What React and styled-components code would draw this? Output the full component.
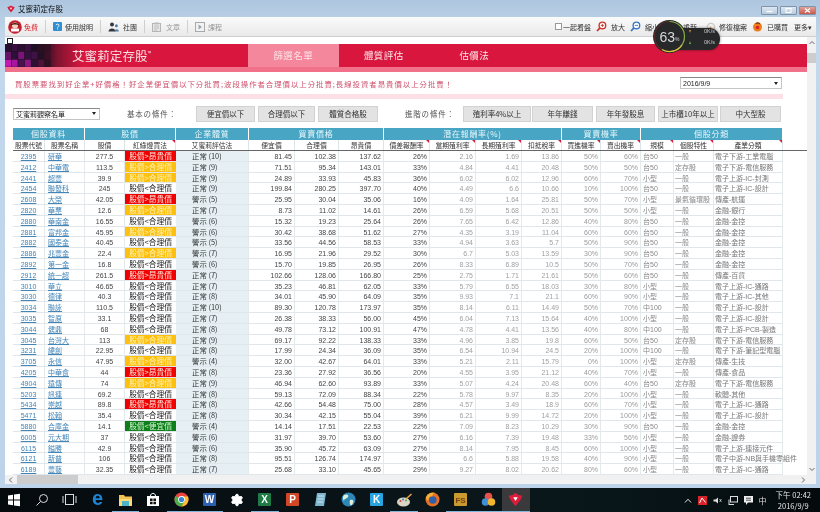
import React from "react";
import styled, { createGlobalStyle } from "styled-components";
import { Settings } from "lucide-react";

const cjk = `"Noto Sans CJK TC", "Liberation Sans", sans-serif`;
const num = `"Liberation Sans", "Noto Sans CJK TC", sans-serif`;

const Global = createGlobalStyle`
	html, body {
		margin: 0;
		padding: 0;
		background: #000;
	}
	* {
		box-sizing: border-box;
	}
`;

const Screen = styled.div`
	position: relative;
	width: 820px;
	height: 512px;
	overflow: hidden;
	display: flex;
	flex-direction: column;
	font-family: ${cjk};
	filter: blur(0.3px);
`;

const Win = styled.div`
	height: 488px;
	display: flex;
	flex-direction: column;
	padding: 0 4px 4px 5px;
	background: linear-gradient(#aec6df, #c3d8ec 40px, #bcd3ea);
`;

const TitleBar = styled.div`
	height: 17px;
	display: flex;
	align-items: center;
	font-size: 7.5px;
	color: #111;
	gap: 3px;
	padding-left: 2px;
`;

const WinButtons = styled.div`
	margin-left: auto;
	display: flex;
	gap: 2px;
	padding-top: 3px;
	margin-right: 0;
`;

const WinButton = styled.div`
	width: ${props => props.w}px;
	height: 9px;
	border: 1px solid #7f93a8;
	border-radius: 1px;
	background: ${props => props.close ? "linear-gradient(#e0a49c, #c9584a)" : "linear-gradient(#dde8f2, #b9cbde)"};
	display: flex;
	align-items: center;
	justify-content: center;
`;

const Toolbar = styled.div`
	height: 20px;
	display: flex;
	align-items: center;
	justify-content: space-between;
	background: linear-gradient(#fbfbfb, #e9e9e9);
	border-bottom: 1px solid #cfcfcf;
	font-size: 7px;
	color: #333;
	padding: 0 4px 0 3px;
`;

const ToolGroup = styled.div`
	display: flex;
	align-items: center;
`;

const ToolItem = styled.div`
	display: flex;
	align-items: center;
	gap: ${props => props.gap || 3}px;
	margin-right: ${props => props.mr || 0}px;
	color: ${props => props.color || "#333"};
	white-space: nowrap;
`;

const ToolSep = styled.div`
	width: 1px;
	height: 13px;
	background: #cfcfcf;
	margin: 0 7px;
`;

const Body = styled.div`
	position: relative;
	height: 438px;
	display: flex;
	background: #fff;
`;

const Main = styled.div`
	width: 802px;
	padding-top: 7px;
	overflow: hidden;
`;

const VBar = styled.div`
	width: 9px;
	background: #f1f1f1;
	display: flex;
	flex-direction: column;
	align-items: center;
	justify-content: space-between;
	padding: 3px 0 3px;
	color: #666;
`;

const VThumb = styled.div`
	width: 9px;
	height: 10px;
	background: #cdcdcd;
	margin-top: 7px;
	margin-bottom: auto;
`;

const HBar = styled.div`
	height: 9px;
	background: #f1f1f1;
	display: flex;
	align-items: center;
	color: #666;
	padding: 0 10px 0 3px;
`;

const HThumb = styled.div`
	width: 61px;
	height: 9px;
	background: #cdcdcd;
	margin-left: 3px;
	margin-right: auto;
`;

const Arrow = styled.svg`
	width: 6px;
	height: 6px;
	flex: none;
`;

const Handle = styled.div`
	position: absolute;
	left: 2px;
	top: 1px;
	width: 6px;
	height: 6px;
	background: #fff;
	border: 1px solid #222;
`;

const Banner = styled.div`
	height: 23px;
	display: flex;
	background: linear-gradient(90deg, #1c0f22 0, #2b0f24 40px, #7d1330 52px, #d9173e 78px);
`;

const Brand = styled.div`
	width: 197px;
	padding-left: 21px;
	color: #f7dfe2;
	font-size: 12.5px;
	line-height: 23px;
	letter-spacing: 0.1px;
	sup {
		font-size: 5px;
		vertical-align: 6px;
		line-height: 0;
	}
`;

const Tab = styled.div`
	width: 90.5px;
	line-height: 23px;
	text-align: center;
	font-size: 9.5px;
	letter-spacing: 0.4px;
	color: ${props => props.active ? "#fde3e8" : "#fbe9ec"};
	background: ${props => props.active ? "#f4879b" : "transparent"};
`;

const BannerStrip = styled.div`
	height: 5px;
	background: #f1718b;
`;

const NoticeRow = styled.div`
	height: 22px;
	display: flex;
	align-items: center;
	justify-content: space-between;
	padding: 0 25px 0 10px;
`;

const Notice = styled.div`
	font-size: 7.4px;
	letter-spacing: 0.98px;
	color: #cf4f6c;
	white-space: nowrap;
`;

const Select = styled.div`
	width: ${props => props.w}px;
	height: 12px;
	border: 1px solid #c4c4c4;
	border-top-color: #8a8a8a;
	background: #fff;
	display: flex;
	align-items: center;
	justify-content: space-between;
	padding: 0 3px 0 2px;
	font-family: ${num};
	font-size: 7px;
	color: #222;
	white-space: nowrap;
`;

const Caret = styled.span`
	width: 0;
	height: 0;
	border-left: 2px solid transparent;
	border-right: 2px solid transparent;
	border-top: 3px solid #222;
`;

const PinkLine = styled.div`
	width: 778px;
	height: 5px;
	background: #fde0e6;
`;

const FilterRow = styled.div`
	height: 29px;
	display: flex;
	align-items: center;
	padding: 0 0 0 8px;
`;

const FilterLabel = styled.div`
	width: ${props => props.w}px;
	padding-left: ${props => props.pl}px;
	font-size: 7.5px;
	letter-spacing: 0.8px;
	color: #555;
	white-space: nowrap;
`;

const FilterButton = styled.div`
	width: ${props => props.w}px;
	height: 16px;
	margin-right: ${props => props.mr ?? 3}px;
	flex: none;
	background: #e3e3e3;
	border: 1px solid #d2d2d2;
	display: flex;
	align-items: center;
	justify-content: center;
	font-size: 7.5px;
	color: #333;
	white-space: nowrap;
`;

const cols = "32px 40px 40px 51px 73px 46px 44px 45px 46px 46px 46px 40px 39px 40px 33px 40px 69px";

const TableWrap = styled.div`
	padding-left: 8px;
`;

const GroupRow = styled.div`
	width: 770px;
	display: grid;
	grid-template-columns: ${cols};
	height: 12px;
`;

const GroupCell = styled.div`
	grid-column: span ${props => props.span};
	background: #48a5c4;
	border-right: 1px solid #fff;
	color: #e8f6fa;
	font-size: 8px;
	letter-spacing: 0.7px;
	line-height: 12px;
	text-align: center;
	position: relative;
`;

const LabelBand = styled.div`
	width: 794px;
	height: 11px;
	border-bottom: 1px solid #666;
`;

const LabelRow = styled.div`
	width: 770px;
	display: grid;
	grid-template-columns: ${cols};
	height: 10px;
`;

const LabelCell = styled.div`
	position: relative;
	font-size: 6.8px;
	line-height: 10px;
	color: #333;
	text-align: center;
	white-space: nowrap;
	border-right: 1px solid #dde4e8;
	${props => props.mark && `
		&::after {
			content: "";
			position: absolute;
			top: 0;
			right: 0;
			border-top: 3px solid #d81e3c;
			border-left: 3px solid transparent;
		}
	`}
`;

const Rows = styled.div`
	width: 770px;
	display: grid;
	grid-template-columns: ${cols};
	grid-auto-rows: 10.8px;
`;

const Cell = styled.div`
	font-family: ${num};
	font-size: 7px;
	line-height: 11px;
	white-space: nowrap;
	border-bottom: 1px solid #e0e6ea;
	border-right: 1px solid #e4e9ec;
	overflow: visible;
	padding: 0 ${props => props.align === "right" ? 2 : 0}px 0 ${props => props.align === "left" ? (props.pl ?? 2) : 0}px;
	text-align: ${props => props.align || "center"};
	color: ${props => props.color || "#444"};
`;

const CodeLink = styled.a`
	color: #4285b8;
	text-decoration: underline;
	font-size: 7px;
	font-family: ${num};
`;

const Tint = styled(Cell)`
	background: #e6f0f4;
	font-size: 7.4px;
	line-height: 9.8px;
	color: #333;
	font-family: ${cjk};
`;

const signalStyle = {
	red: { bg: "#f00000", fg: "#ffe9e0" },
	yellow: { bg: "#fdc010", fg: "#fff2b5" },
	green: { bg: "#0d7f18", fg: "#d6f3d6" },
	none: { bg: "#fff", fg: "#222" },
};

const SignalWrap = styled.div`
	border-bottom: 1px solid #e0e6ea;
	background: #fff;
	overflow: hidden;
`;

const Signal = styled.div`
	height: 9.8px;
	line-height: 10px;
	text-align: center;
	font-size: 7.7px;
	background: ${props => signalStyle[props.kind].bg};
	color: ${props => signalStyle[props.kind].fg};
`;

const Taskbar = styled.div`
	height: 24px;
	display: flex;
	background: linear-gradient(90deg, #050a0d, #0a1519 50%, #08161a 75%, #050a0c);
`;

const Slot = styled.div`
	width: 27.9px;
	height: 24px;
	flex: none;
	display: flex;
	align-items: center;
	justify-content: center;
	background: ${props => props.active ? "#3a3a3c" : "transparent"};
	border-bottom: 1px solid ${props => props.open ? "#7fb6dc" : "transparent"};
`;

const EdgeGlyph = styled.span`
	font-family: "Liberation Sans", sans-serif;
	font-weight: 700;
	font-size: 20px;
	line-height: 18px;
	color: #1d84d6;
	margin-top: -3px;
`;

const Tray = styled.div`
	margin-left: auto;
	display: flex;
	align-items: center;
	gap: 6px;
	color: #ddd;
	padding-right: 9px;
`;

const Clock = styled.div`
	font-size: 7.5px;
	line-height: 11px;
	color: #e6e6e6;
	text-align: center;
	margin-left: 3px;
	font-family: ${cjk};
`;

const ImeMark = styled.span`
	font-size: 8px;
	color: #ddd;
`;

const Meter = styled.div`
	position: absolute;
	left: 653px;
	top: 20px;
	width: 67px;
	height: 33px;
	display: flex;
	align-items: center;
`;

const MeterPill = styled.div`
	position: absolute;
	left: 12px;
	top: 8px;
	width: 55px;
	height: 22px;
	background: #26282a;
	border-radius: 11px;
	box-shadow: 0 0 3px rgba(0, 0, 0, 0.5);
`;

const MeterDial = styled.div`
	position: relative;
	width: 33px;
	height: 33px;
	border-radius: 50%;
	background: #26282a;
	display: flex;
	align-items: center;
	justify-content: center;
	color: #d8d8d8;
	font-family: ${num};
	font-size: 14px;
	font-weight: 300;
	svg {
		position: absolute;
		inset: 0;
	}
	small {
		font-size: 5px;
		margin-top: 5px;
	}
`;

const MeterSpeeds = styled.div`
	position: relative;
	flex: 1;
	padding: 0 5px 0 3px;
	display: flex;
	flex-direction: column;
	gap: 3px;
	font-family: ${num};
	font-size: 5.5px;
	color: #c9c9c9;
`;

const MeterLine = styled.div`
	display: flex;
	justify-content: space-between;
	align-items: center;
	line-height: 8px;
`;

const MeterArrow = styled.span`
	width: 0;
	height: 0;
	border-left: 1.5px solid transparent;
	border-right: 1.5px solid transparent;
	${props => props.up ? "border-top: 3px solid #e08a2c;" : "border-bottom: 3px solid #6fb544;"}
`;

const data = [
	["2395", "研華", "277.5", "red", "正常 (10)", "81.45", "102.38", "137.62", "26%", "2.16", "1.69", "13.86", "50%", "60%", "台50", "一般", "電子下游-工業電腦"],
	["2412", "中華電", "113.5", "yellow", "正常 (9)", "71.51", "95.34", "143.01", "33%", "4.84", "4.41", "20.48", "50%", "50%", "台50", "定存股", "電子下游-電信服務"],
	["2441", "超豐", "39.9", "yellow", "正常 (9)", "24.89", "33.93", "45.83", "36%", "6.02", "6.02", "12.96", "60%", "70%", "小型", "一般", "電子上游-IC-封測"],
	["2454", "聯發科", "245", "none", "正常 (9)", "199.84", "280.25", "397.70", "40%", "4.49", "6.6", "10.66", "10%", "100%", "台50", "一般", "電子上游-IC-設計"],
	["2608", "大榮", "42.05", "red", "警示 (5)", "25.95", "30.04", "35.06", "16%", "4.09", "1.64", "25.81", "50%", "70%", "小型", "景氣循環股", "傳產-航運"],
	["2820", "華票", "12.6", "yellow", "正常 (7)", "8.73", "11.02", "14.61", "26%", "6.59", "5.68", "20.51", "50%", "50%", "小型", "一般", "金融-銀行"],
	["2880", "華南金", "16.55", "none", "警示 (6)", "15.32", "19.23", "25.64", "26%", "7.65", "6.42", "12.86", "40%", "80%", "台50", "一般", "金融-金控"],
	["2881", "富邦金", "45.95", "yellow", "警示 (6)", "30.42", "38.68", "51.62", "27%", "4.35", "3.19", "11.04", "60%", "60%", "台50", "一般", "金融-金控"],
	["2882", "國泰金", "40.45", "none", "警示 (5)", "33.56", "44.56", "58.53", "33%", "4.94", "3.63", "5.7", "50%", "90%", "台50", "一般", "金融-金控"],
	["2886", "兆豐金", "22.4", "yellow", "警示 (7)", "16.95", "21.96", "29.52", "30%", "6.7", "5.03", "13.59", "30%", "90%", "台50", "一般", "金融-金控"],
	["2892", "第一金", "16.8", "none", "警示 (6)", "15.70", "19.85", "26.95", "26%", "8.33", "6.89", "10.5", "50%", "70%", "台50", "一般", "金融-金控"],
	["2912", "統一超", "261.5", "red", "正常 (7)", "102.66", "128.06", "166.80", "25%", "2.75", "1.71", "21.61", "50%", "60%", "台50", "一般", "傳產-百貨"],
	["3010", "華立", "46.65", "none", "正常 (7)", "35.23", "46.81", "62.05", "33%", "5.79", "6.55", "18.03", "30%", "80%", "小型", "一般", "電子上游-IC-通路"],
	["3030", "德律", "40.3", "none", "正常 (8)", "34.01", "45.90", "64.09", "35%", "9.93", "7.1", "21.1", "60%", "90%", "小型", "一般", "電子上游-IC-其他"],
	["3034", "聯詠", "110.5", "none", "正常 (10)", "89.30", "120.78", "173.97", "35%", "8.14", "6.11", "14.49", "50%", "70%", "中100", "一般", "電子上游-IC-設計"],
	["3035", "智原", "33.1", "none", "正常 (7)", "26.38", "38.33", "56.00", "45%", "6.04", "7.13", "15.64", "40%", "100%", "小型", "一般", "電子上游-IC-設計"],
	["3044", "健鼎", "68", "none", "正常 (8)", "49.78", "73.12", "100.91", "47%", "4.78", "4.41", "13.56", "40%", "80%", "中100", "一般", "電子上游-PCB-製造"],
	["3045", "台灣大", "113", "yellow", "正常 (9)", "69.17", "92.22", "138.33", "33%", "4.96", "3.85", "19.8", "60%", "50%", "台50", "定存股", "電子下游-電信服務"],
	["3231", "緯創", "22.95", "none", "正常 (8)", "17.99", "24.34", "36.09", "35%", "6.54", "10.94", "24.5", "20%", "100%", "中100", "一般", "電子下游-筆記型電腦"],
	["3705", "永信", "47.95", "yellow", "警示 (4)", "32.00", "42.67", "64.01", "33%", "5.21", "2.11", "15.79", "0%", "100%", "小型", "定存股", "傳產-生技"],
	["4205", "中華食", "44", "red", "正常 (8)", "23.36", "27.92", "36.56", "20%", "4.55", "3.95", "21.12", "40%", "70%", "小型", "一般", "傳產-食品"],
	["4904", "遠傳", "74", "yellow", "正常 (9)", "46.94", "62.60", "93.89", "33%", "5.07", "4.24", "20.48", "60%", "40%", "台50", "定存股", "電子下游-電信服務"],
	["5203", "訊連", "69.2", "none", "正常 (8)", "59.13", "72.09", "88.34", "22%", "5.78", "9.97", "8.35", "20%", "100%", "小型", "一般", "軟體-其他"],
	["5434", "崇越", "89.8", "red", "正常 (8)", "42.66", "54.48", "75.00", "28%", "4.57", "3.49", "18.9", "60%", "70%", "小型", "一般", "電子上游-IC-通路"],
	["5471", "松翰", "35.4", "none", "正常 (8)", "30.34", "42.15", "55.04", "39%", "6.21", "9.99", "14.72", "20%", "100%", "小型", "一般", "電子上游-IC-設計"],
	["5880", "合庫金", "14.1", "green", "警示 (4)", "14.14", "17.51", "22.53", "22%", "7.09", "8.23", "10.29", "30%", "90%", "台50", "一般", "金融-金控"],
	["6005", "元大期", "37", "none", "警示 (6)", "31.97", "39.70", "53.60", "27%", "6.16", "7.39", "19.48", "33%", "56%", "小型", "一般", "金融-證券"],
	["6115", "鎰勝", "42.9", "none", "警示 (6)", "35.90", "45.72", "63.09", "27%", "8.14", "7.95", "8.45", "60%", "100%", "小型", "一般", "電子上游-連接元件"],
	["6121", "新普", "106", "none", "正常 (8)", "95.51", "126.74", "174.97", "33%", "6.6", "5.88", "19.58", "40%", "90%", "小型", "一般", "電子中游-NB與手機零組件"],
	["6189", "豐藝", "32.35", "none", "正常 (7)", "25.68", "33.10", "45.65", "29%", "9.27", "8.02", "20.62", "80%", "60%", "小型", "一般", "電子上游-IC-通路"],
];

const signalText = {
	red: "股價>昂貴價",
	yellow: "股價>合理價",
	green: "股價<便宜價",
	none: "股價<合理價",
};

const labels = [
	["股票代號"], ["股票名稱"], ["股價"], ["紅綠燈買法", 1], ["艾蜜莉評估法"], ["便宜價"], ["合理價"], ["昂貴價"],
	["價差報酬率", 1], ["當期殖利率", 1], ["長期殖利率", 1], ["扣抵稅率", 1], ["買進機率", 1], ["賣出機率", 1],
	["規模", 1], ["個股特性", 1], ["產業分類", 1],
];

const pixelGrid = [
	["#2a1030", "#3a1040", "#2c0f33", "#3a1240", "#1f0f26", "#2a1020", "#331022"],
	["#6a1268", "#2c1038", "#7a1478", "#331040", "#3e1244", "#241024", "#3c1024"],
	["#c418b0", "#a816a0", "#4a1250", "#8a1684", "#2e1034", "#4a1238", "#2a1020"],
];

const Row = ({ r }) => (
	<>
		<Cell><CodeLink>{r[0]}</CodeLink></Cell>
		<Cell align="left" pl={3}><CodeLink>{r[1]}</CodeLink></Cell>
		<Cell>{r[2]}</Cell>
		<SignalWrap><Signal kind={r[3]}>{signalText[r[3]]}</Signal></SignalWrap>
		<Tint align="left" pl={16}>{r[4]}</Tint>
		<Cell align="right">{r[5]}</Cell>
		<Cell align="right">{r[6]}</Cell>
		<Cell align="right">{r[7]}</Cell>
		<Cell align="right">{r[8]}</Cell>
		<Cell align="right" color="#a0a0a0">{r[9]}</Cell>
		<Cell align="right" color="#a0a0a0">{r[10]}</Cell>
		<Cell align="right" color="#a0a0a0">{r[11]}</Cell>
		<Cell align="right" color="#9a9a9a">{r[12]}</Cell>
		<Cell align="right" color="#9a9a9a">{r[13]}</Cell>
		<Cell align="left" color="#888">{r[14]}</Cell>
		<Cell align="left" color="#888" pl={1}>{r[15]}</Cell>
		<Cell align="left" color="#777" pl={1}>{r[16]}</Cell>
	</>
);

const Pixels = () => (
	<svg width="46" height="23" viewBox="0 0 46 23" style={{ flex: "none", display: "block" }}>
		{pixelGrid.map((line, y) => line.map((c, x) => (
			<rect key={x + "-" + y} x={x * 6.6} y={y * 7.8} width="6" height="7.2" fill={c} />
		)))}
	</svg>
);

const AppMark = ({ size = 8 }) => (
	<svg width={size} height={size} viewBox="0 0 10 10">
		<path d="M5 0.5 7 2 9.5 2.5 8.5 5 5 9.5 1.5 5 0.5 2.5 3 2Z" fill="#d81e3c" />
		<path d="M3.5 3.5h3L5 6Z" fill="#fff" />
	</svg>
);

const Avatar = () => (
	<svg width="14" height="14" viewBox="0 0 14 14">
		<circle cx="7" cy="7" r="6.8" fill="#c3202f" />
		<circle cx="7" cy="5.6" r="3" fill="#f3d3bf" />
		<path d="M2.6 5.6C3 2 11 2 11.4 5.6 9.5 4 4.5 4 2.6 5.6Z" fill="#3c1a14" />
		<rect x="3" y="8.4" width="8" height="3" rx="0.6" fill="#fff" />
	</svg>
);

const HelpIcon = () => (
	<svg width="9" height="9" viewBox="0 0 9 9">
		<rect width="9" height="9" rx="1" fill="#2f8fd0" />
		<path d="M3 3.2C3.4 1.6 6 1.8 6 3.4 6 4.5 4.6 4.4 4.6 5.6" fill="none" stroke="#fff" strokeWidth="1" />
		<rect x="4.1" y="6.4" width="1" height="1" fill="#fff" />
	</svg>
);

const PeopleIcon = () => (
	<svg width="11" height="10" viewBox="0 0 11 10">
		<circle cx="4" cy="2.6" r="2" fill="#33383e" />
		<path d="M0.5 9.5C0.5 5.5 7.5 5.5 7.5 9.5Z" fill="#33383e" />
		<circle cx="8.4" cy="3.8" r="1.5" fill="#4f7fa8" />
		<path d="M6.5 9.5C6.5 6.4 10.8 6.4 10.8 9.5Z" fill="#4f7fa8" />
	</svg>
);

const DocIcon = () => (
	<svg width="9" height="10" viewBox="0 0 9 10">
		<rect x="0.5" y="1.5" width="8" height="8" fill="#e6e6e6" stroke="#b5b5b5" />
		<path d="M2 4h5M2 6h5M2 8h3" stroke="#bdbdbd" />
		<rect x="2.5" y="0.4" width="4" height="2" fill="#bdbdbd" />
	</svg>
);

const ClassIcon = () => (
	<svg width="10" height="10" viewBox="0 0 10 10">
		<rect x="0.5" y="0.5" width="9" height="9" fill="#f2f2f2" stroke="#a9a9a9" />
		<path d="M3.5 2.6 7 5 3.5 7.4Z" fill="#9aa4ac" />
	</svg>
);

const Lens = ({ color, sign }) => (
	<svg width="11" height="11" viewBox="0 0 11 11">
		<circle cx="6.4" cy="4.4" r="3.3" fill="#fff" stroke={color} strokeWidth="1.4" />
		<path d="M4 6.8 1 10" stroke={color} strokeWidth="1.8" />
		<path d={sign === "+" ? "M4.8 4.4h3.2M6.4 2.8v3.2" : "M4.8 4.4h3.2"} stroke={color} strokeWidth="0.9" />
	</svg>
);

const RepairIcon = () => (
	<svg width="10" height="10" viewBox="0 0 10 10">
		<circle cx="5" cy="5" r="3.6" fill="none" stroke="#c9c9c9" strokeWidth="1.4" />
		<path d="M2 8 5 5" stroke="#d98f3a" strokeWidth="1.2" />
	</svg>
);

const BoughtIcon = () => (
	<svg width="11" height="11" viewBox="0 0 11 11">
		<circle cx="5.5" cy="6" r="4.5" fill="#ef7d1a" />
		<path d="M3 3C4.5 0.5 8 1 8.5 3.5 7 2.5 5 2.5 3 3Z" fill="#7a3b12" />
		<circle cx="5.5" cy="6.5" r="1.8" fill="#d8232a" />
	</svg>
);

const CheckBox = styled.span`
	width: 7px;
	height: 7px;
	border: 1px solid #999;
	background: #fff;
`;

const MinGlyph = () => (
	<svg width="7" height="5" viewBox="0 0 7 5"><path d="M0.5 3.5h6" stroke="#fff" strokeWidth="1.4" /></svg>
);
const MaxGlyph = () => (
	<svg width="7" height="5" viewBox="0 0 7 5"><rect x="1" y="0.5" width="5" height="4" fill="none" stroke="#fff" /></svg>
);
const CloseGlyph = () => (
	<svg width="7" height="5" viewBox="0 0 7 5"><path d="M1 0.5 6 4.5M6 0.5 1 4.5" stroke="#fff" strokeWidth="1.2" /></svg>
);

const Tile = ({ fill, children, fg = "#fff", size = 10 }) => (
	<svg width="15" height="15" viewBox="0 0 15 15">
		<rect x="1" y="1" width="13" height="13" rx="1" fill={fill} />
		<text x="7.5" y="11" fontSize={size} fontWeight="700" fontFamily="Liberation Sans" textAnchor="middle" fill={fg}>{children}</text>
	</svg>
);

const taskIcons = [
	{ id: "win", el: (
		<svg width="14" height="14" viewBox="0 0 14 14" fill="#fff">
			<path d="M1 2.4 6 1.7V6.5H1ZM7 1.5 13 .7V6.5H7ZM1 7.5H6V12.3L1 11.6ZM7 7.5H13V13.3L7 12.5Z" />
		</svg>
	) },
	{ id: "search", el: (
		<svg width="14" height="14" viewBox="0 0 14 14" fill="none" stroke="#dcdcdc" strokeWidth="1">
			<circle cx="8.5" cy="5.5" r="4" />
			<path d="M5.5 8.5 1.5 12.5" />
		</svg>
	) },
	{ id: "view", el: (
		<svg width="15" height="13" viewBox="0 0 15 13" fill="none" stroke="#dcdcdc">
			<rect x="3.5" y="1.5" width="8" height="10" />
			<path d="M1 3v7M14 3v7" />
		</svg>
	) },
	{ id: "edge", el: <EdgeGlyph>e</EdgeGlyph> },
	{ id: "files", open: true, el: (
		<svg width="15" height="14" viewBox="0 0 15 14">
			<path d="M1 2h5l1 1.5h7V13H1Z" fill="#f2c14e" />
			<rect x="1" y="6" width="13" height="7" fill="#f9d978" />
			<rect x="4" y="8" width="7" height="5" fill="#4fb3c8" />
		</svg>
	) },
	{ id: "store", el: (
		<svg width="14" height="15" viewBox="0 0 14 15">
			<path d="M1 4H13V14H1Z" fill="#fff" />
			<path d="M4.5 4C4.5 0.5 9.5 0.5 9.5 4" fill="none" stroke="#fff" />
			<path d="M4 6.5H6.6V9H4ZM7.4 6.5H10V9H7.4ZM4 9.8H6.6V12.2H4ZM7.4 9.8H10V12.2H7.4Z" fill="#111" />
		</svg>
	) },
	{ id: "chrome", open: true, el: (
		<svg width="15" height="15" viewBox="0 0 15 15">
			<circle cx="7.5" cy="7.5" r="7" fill="#e8453c" />
			<path d="M7.5 7.5 1.4 4C.1 6.4.2 9 1.6 11.2S5 14.6 7.5 14.5L11 8.5Z" fill="#4bae4f" />
			<path d="M7.5 4.5H14C14.8 6.6 14.6 9.4 13.5 11 12.4 13 10 14.4 7.5 14.5L11 8.5Z" fill="#fbc02d" />
			<circle cx="7.5" cy="7.5" r="3.4" fill="#fff" />
			<circle cx="7.5" cy="7.5" r="2.6" fill="#3b82d8" />
		</svg>
	) },
	{ id: "word", open: true, el: <Tile fill="#2b5fb0">W</Tile> },
	{ id: "gear", el: <Settings size={14} color="#111" fill="#fff" strokeWidth={1.6} stroke="#fff" /> },
	{ id: "excel", open: true, el: <Tile fill="#1f7a45">X</Tile> },
	{ id: "ppt", el: <Tile fill="#d24726">P</Tile> },
	{ id: "note", el: (
		<svg width="13" height="15" viewBox="0 0 13 15">
			<path d="M3 1H12L10 14H1Z" fill="#7fb6cf" />
			<path d="M4 4h6M3.6 7h6M3.2 10h6" stroke="#cfe6ef" />
		</svg>
	) },
	{ id: "globe", el: (
		<svg width="15" height="15" viewBox="0 0 15 15">
			<circle cx="7.5" cy="7.5" r="7" fill="#2d88b8" />
			<path d="M3 3C6 1.5 8 3 7 5S3 6 3 9C1.5 7 1.6 4.6 3 3ZM9 8C12 7 13.5 9 11.5 12S8 12 9 8Z" fill="#dff0d8" />
		</svg>
	) },
	{ id: "k", el: <Tile fill="#28a5e0">K</Tile> },
	{ id: "paint", open: true, el: (
		<svg width="17" height="14" viewBox="0 0 17 14">
			<ellipse cx="7.5" cy="9" rx="6.5" ry="4.5" fill="#d9d4c6" />
			<circle cx="4.5" cy="8" r="1" fill="#d8413a" />
			<circle cx="7" cy="6.5" r="1" fill="#3d86c6" />
			<circle cx="10" cy="7.5" r="1" fill="#5aa84a" />
			<path d="M10 6 15.5 1" stroke="#e6a24a" strokeWidth="1.6" />
		</svg>
	) },
	{ id: "firefox", el: (
		<svg width="15" height="15" viewBox="0 0 15 15">
			<circle cx="7.5" cy="7.5" r="7" fill="#e66f21" />
			<circle cx="7.8" cy="8" r="3.8" fill="#2f5fa8" />
			<path d="M1 6C2 1.5 7 0 10 1 8 1.5 7 3 7.5 4.2 4.5 4 3 6 3.5 8.5 2 8.5 1.2 7.5 1 6Z" fill="#f6b13c" />
		</svg>
	) },
	{ id: "fs", open: true, el: <Tile fill="#c99a2e" fg="#7a3f12" size={8}>FS</Tile> },
	{ id: "blobs", open: true, el: (
		<svg width="15" height="15" viewBox="0 0 15 15">
			<circle cx="7.5" cy="4.5" r="3.8" fill="#e6524b" />
			<circle cx="4.5" cy="10" r="3.8" fill="#3e8fd6" />
			<circle cx="10.5" cy="10" r="3.8" fill="#f2b632" />
		</svg>
	) },
	{ id: "app", open: true, active: true, el: <AppMark size={15} /> },
];

const App = () => {
	return (
		<Screen>
			<Global />
			<Win>
				<TitleBar>
					<AppMark />
					<span>艾蜜莉定存股</span>
					<WinButtons>
						<WinButton w={17}><MinGlyph /></WinButton>
						<WinButton w={17}><MaxGlyph /></WinButton>
						<WinButton w={17} close><CloseGlyph /></WinButton>
					</WinButtons>
				</TitleBar>
				<Toolbar>
					<ToolGroup>
						<ToolItem color="#d8232a" gap={2}><Avatar />免費</ToolItem>
						<ToolSep />
						<ToolItem><HelpIcon />使用說明</ToolItem>
						<ToolSep />
						<ToolItem gap={4}><PeopleIcon />社團</ToolItem>
						<ToolSep />
						<ToolItem color="#999" gap={5}><DocIcon />文章</ToolItem>
						<ToolSep />
						<ToolItem color="#999"><ClassIcon />課程</ToolItem>
					</ToolGroup>
					<ToolGroup>
						<ToolItem mr={5} gap={1}><CheckBox />一起看盤</ToolItem>
						<ToolItem mr={5} gap={4}><Lens color="#c9382f" sign="+" />放大</ToolItem>
						<ToolItem mr={24} gap={4}><Lens color="#3a78c2" sign="-" />縮小</ToolItem>
						<ToolItem mr={9}>重新</ToolItem>
						<ToolItem mr={5} gap={3}><RepairIcon />修復檔案</ToolItem>
						<ToolItem mr={6} gap={4}><BoughtIcon />已購買</ToolItem>
						<ToolItem>更多▾</ToolItem>
					</ToolGroup>
				</Toolbar>
				<Body>
					<Handle />
					<Main>
						<Banner>
							<Pixels />
							<Brand>艾蜜莉定存股<sup>™</sup></Brand>
							<Tab active>篩選名單</Tab>
							<Tab>體質評估</Tab>
							<Tab>估價法</Tab>
						</Banner>
						<BannerStrip />
						<NoticeRow>
							<Notice>買股票要找到好企業+好價格！好企業便宜價以下分批買;波段操作者合理價以上分批賣;長線投資者昂貴價以上分批賣！</Notice>
							<Select w={102}>2016/9/9<Caret /></Select>
						</NoticeRow>
						<PinkLine />
						<FilterRow>
							<Select w={87}>艾蜜莉觀察名單<Caret /></Select>
							<FilterLabel w={96} pl={27}>基本の條件：</FilterLabel>
							<FilterButton w={59}>便宜價以下</FilterButton>
							<FilterButton w={57}>合理價以下</FilterButton>
							<FilterButton w={60} mr={0}>體質合格股</FilterButton>
							<FilterLabel w={85} pl={27}>進階の條件：</FilterLabel>
							<FilterButton w={68} mr={1}>殖利率4%以上</FilterButton>
							<FilterButton w={61}>年年賺錢</FilterButton>
							<FilterButton w={59} mr={3}>年年發股息</FilterButton>
							<FilterButton w={60} mr={2}>上市櫃10年以上</FilterButton>
							<FilterButton w={61} mr={0}>中大型股</FilterButton>
						</FilterRow>
						<TableWrap>
							<GroupRow>
								<GroupCell span={2}>個股資料</GroupCell>
								<GroupCell span={2}>股價</GroupCell>
								<GroupCell span={1}>企業體質</GroupCell>
								<GroupCell span={3}>買賣價格</GroupCell>
								<GroupCell span={4}>潛在報酬率(%)</GroupCell>
								<GroupCell span={2}>買賣機率</GroupCell>
								<GroupCell span={3}>個股分類</GroupCell>
							</GroupRow>
							<LabelBand>
								<LabelRow>
									{labels.map(([text, mark]) => (
										<LabelCell key={text} mark={mark}>{text}</LabelCell>
									))}
								</LabelRow>
							</LabelBand>
							<Rows>
								{data.map(r => <Row key={r[0]} r={r} />)}
							</Rows>
						</TableWrap>
					</Main>
					<VBar>
						<Arrow viewBox="0 0 6 6"><path d="M0.5 4 3 1.5 5.5 4" fill="none" stroke="currentColor" /></Arrow>
						<VThumb />
						<Arrow viewBox="0 0 6 6"><path d="M0.5 2 3 4.5 5.5 2" fill="none" stroke="currentColor" /></Arrow>
					</VBar>
				</Body>
				<HBar>
					<Arrow viewBox="0 0 6 6"><path d="M4 0.5 1.5 3 4 5.5" fill="none" stroke="currentColor" /></Arrow>
					<HThumb />
					<Arrow viewBox="0 0 6 6"><path d="M2 0.5 4.5 3 2 5.5" fill="none" stroke="currentColor" /></Arrow>
				</HBar>
			</Win>
			<Taskbar>
				{taskIcons.map(t => (
					<Slot key={t.id} open={t.open} active={t.active}>{t.el}</Slot>
				))}
				<Tray>
					<svg width="8" height="5" viewBox="0 0 8 5"><path d="M1 4.5 4 1.2 7 4.5" fill="none" stroke="#ddd" /></svg>
					<svg width="9" height="9" viewBox="0 0 9 9"><rect width="9" height="9" fill="#d8232a" /><path d="M1.5 7 4 2 7.5 6.5" fill="none" stroke="#fff" /></svg>
					<svg width="9" height="9" viewBox="0 0 9 9"><path d="M0.5 3.5H2.5L5 1.5V7.5L2.5 5.5H0.5Z" fill="#ddd" /><path d="M6.5 3 8.5 6M8.5 3 6.5 6" stroke="#ddd" strokeWidth="0.7" /></svg>
					<svg width="10" height="9" viewBox="0 0 10 9" fill="none" stroke="#ddd"><rect x="2.5" y="0.5" width="7" height="5.5" /><path d="M0.5 8.5H6M1 3.5V8" /></svg>
					<svg width="9" height="9" viewBox="0 0 9 9"><path d="M0 0H9V6.5H4L2 9V6.5H0Z" fill="#eee" /><path d="M2 2.2H7M2 4.2H7" stroke="#111" strokeWidth="0.7" /></svg>
					<ImeMark>中</ImeMark>
					<Clock>下午 02:42<br />2016/9/9</Clock>
				</Tray>
			</Taskbar>
			<Meter>
				<MeterPill />
				<MeterDial>
					<svg width="33" height="33" viewBox="0 0 33 33" fill="none">
						<circle cx="16.5" cy="16.5" r="15" stroke="#5a2a2a" strokeWidth="1.2" />
						<path d="M16.5 1.5A15 15 0 0 1 16.5 31.5" stroke="#7fb346" strokeWidth="1.2" />
						<path d="M29 25A15 15 0 0 1 9 29.5" stroke="#d8c53c" strokeWidth="1.2" />
					</svg>
					63<small>%</small>
				</MeterDial>
				<MeterSpeeds>
					<MeterLine><MeterArrow up />0K/s</MeterLine>
					<MeterLine><MeterArrow />0K/s</MeterLine>
				</MeterSpeeds>
			</Meter>
		</Screen>
	);
};

export default App;
